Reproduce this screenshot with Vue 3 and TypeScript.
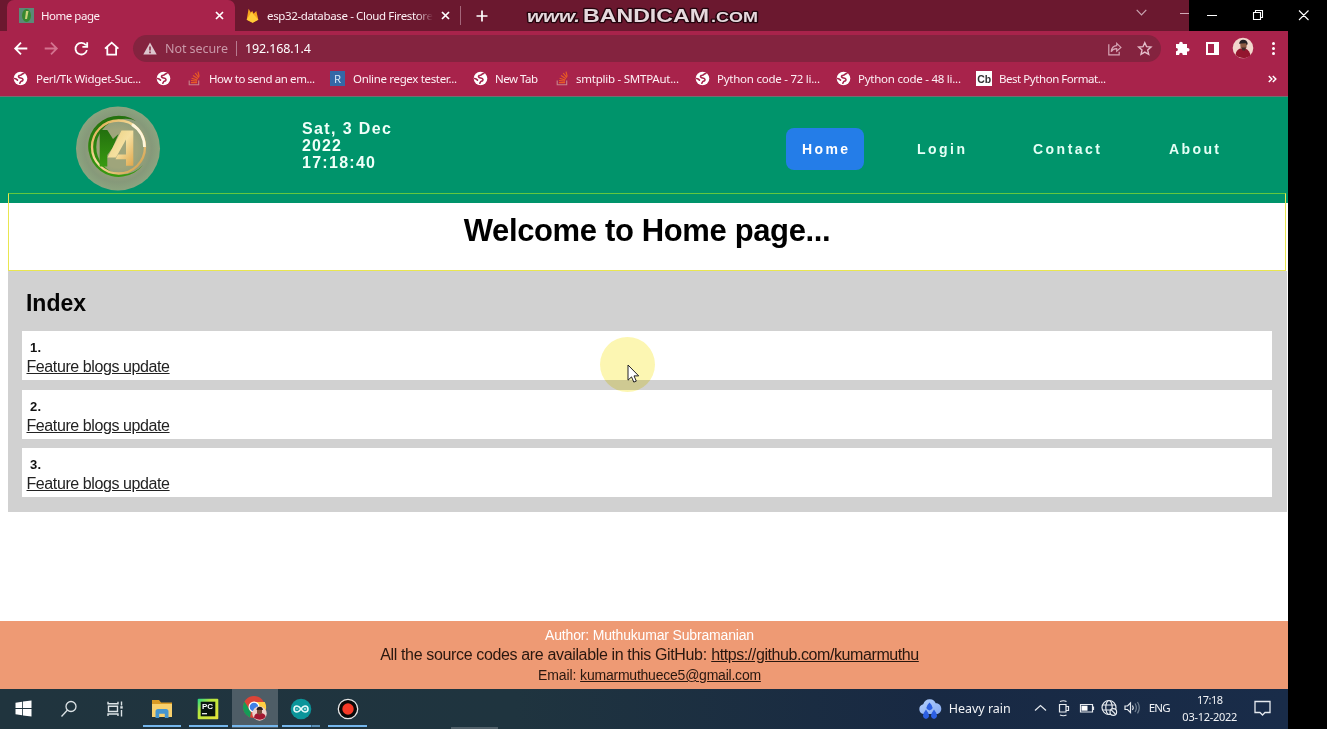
<script setup lang="ts">
interface Bookmark { kind: 'globe' | 'stack' | 'regex' | 'cb'; label: string; slot: number; pad: number; text: number }

const bookmarks: Bookmark[] = [
  { kind: 'globe', label: 'Perl/Tk Widget-Suc...', slot: 143, pad: 23, text: 105 },
  { kind: 'globe', label: '', slot: 32, pad: 14, text: 0 },
  { kind: 'stack', label: 'How to send an em...', slot: 142, pad: 21, text: 106 },
  { kind: 'regex', label: 'Online regex tester...', slot: 143, pad: 23, text: 104 },
  { kind: 'globe', label: 'New Tab', slot: 83, pad: 22, text: 43 },
  { kind: 'stack', label: 'smtplib - SMTPAut...', slot: 139, pad: 20, text: 103 },
  { kind: 'globe', label: 'Python code - 72 li...', slot: 141, pad: 22, text: 103 },
  { kind: 'globe', label: 'Python code - 48 li...', slot: 140, pad: 22, text: 103 },
  { kind: 'cb', label: 'Best Python Format...', slot: 140, pad: 23, text: 107 },
]

const entries = ['1.', '2.', '3.']

/* Tracks a single line of text out to the given width. */
const vFit = {
  mounted(el: HTMLElement, binding: { value: number }) {
    const count = (el.textContent ?? '').length
    if (!binding.value || count < 2) return
    const natural = el.getBoundingClientRect().width
    el.style.letterSpacing = `${(binding.value - natural) / (count - 1)}px`
    el.style.width = `${binding.value}px`
  },
}
</script>

<template>
  <div class="desktop">
    <div class="screen">
      <div class="tabstrip">
        <div class="tab active">
          <svg class="fav" width="15" height="15" viewBox="0 0 15 15"><rect width="15" height="15" fill="#5b8a78" /><ellipse cx="7.5" cy="7.5" rx="4.5" ry="6.5" fill="#37882f" /><path d="M7 3h2.5L8 11H6z" fill="#c9d27a" /></svg>
          <span v-fit="59" class="t ui">Home page</span>
          <svg class="close" width="9" height="9" viewBox="0 0 9 9"><path d="M1 1l7 7M8 1L1 8" stroke="#fff" stroke-width="1.7" /></svg>
        </div>
        <div class="tab second">
          <svg class="fav" width="13" height="15" viewBox="0 0 13 15"><path d="M.7 11.8L2.6.8 5 4.7l1.2-2 1.4 3L10.3 3l2 8.8-5.7 3z" fill="#f8a51e" /><path d="M.7 11.8L5.5 4l6.8 7.8-5.7 3z" fill="#ffcb38" /></svg>
          <span class="clip"><span v-fit="166" class="t ui">esp32-database - Cloud Firestore</span></span>
          <svg class="close" width="9" height="9" viewBox="0 0 9 9"><path d="M1 1l7 7M8 1L1 8" stroke="#fff" stroke-width="1.7" /></svg>
        </div>
        <svg class="plus" width="12" height="12" viewBox="0 0 12 12"><path d="M6 .5v11M.5 6h11" stroke="#fff" stroke-width="1.7" /></svg>
        <svg class="watermark" width="240" height="26" viewBox="0 0 240 26">
          <g font-family="'Liberation Sans', sans-serif" font-weight="bold" fill="#e6d9dd" stroke="#24060f" stroke-width="2.4" paint-order="stroke" stroke-linejoin="round">
            <text x="5" y="18.5" font-size="17" font-style="italic" textLength="53" lengthAdjust="spacingAndGlyphs">www.</text>
            <text x="61" y="18.5" font-size="19" textLength="126" lengthAdjust="spacingAndGlyphs">BANDICAM</text>
            <text x="189" y="18.5" font-size="14" textLength="47" lengthAdjust="spacingAndGlyphs">.COM</text>
          </g>
        </svg>
        <svg class="chev" width="11" height="7" viewBox="0 0 11 7"><path d="M.7.8l4.8 5 4.8-5" fill="none" stroke="#c9a5b1" stroke-width="1.2" /></svg>
        <i class="mini" />
      </div>

      <div class="toolbar">
        <svg class="navs" width="133" height="32" viewBox="0 0 133 32" fill="none" stroke="#fff" stroke-width="1.8">
          <path d="M27.3 17.5H15.4M21 11.7l-5.8 5.8 5.8 5.8" />
          <path d="M44.7 17.5h11.9M51 11.7l5.8 5.8-5.8 5.8" stroke="#d3738f" />
          <path d="M86 14.3a5.8 5.8 0 1 0 .9 4.8M87.2 11.2v4.7h-4.8" />
          <path d="M105 17.7l6.7-6 6.7 6M107.3 16.3v7.3h8.8v-7.3" />
        </svg>
        <div class="omnibox">
          <svg class="warn" width="14" height="13" viewBox="0 0 14 13"><path d="M7 .5L13.7 12.5H.3z" fill="#ddc6ce" /><path d="M7 4.6v3.8M7 9.5v1.7" stroke="#84233f" stroke-width="1.5" /></svg>
          <span v-fit="63" class="t insecure">Not secure</span>
          <i class="sep" />
          <span v-fit="66" class="t addr">192.168.1.4</span>
          <svg class="boxicons" width="50" height="20" viewBox="0 0 50 20" fill="none" stroke="#d6a5b5" stroke-width="1.2">
            <path d="M2.8 5.2v10.6h10.4v-3M5.2 12.7c.4-4 2.7-5.9 5.5-6V4.4l4.2 4-4.2 3.8V9.7c-2.7 0-4.4 1-5.5 3z" />
            <path d="M38.8 3.7l1.8 4 4.4.4-3.3 3 1 4.3-3.9-2.3-3.8 2.3 1-4.3-3.4-3 4.4-.4z" stroke="#e4bfcb" stroke-width="1.4" />
          </svg>
        </div>
        <svg class="actions" width="127" height="32" viewBox="0 0 127 32">
          <path d="M15 13h3.2c-.5-3 4-3 3.6 0H26v4c3.4-.6 3.4 4 0 3.5V24h-4.3c.2-3-3.6-3-3.5 0H15v-3.8c2.5.2 2.5-3.5 0-3.2z" fill="#fff" />
          <path d="M46 12h11v11H46z" fill="none" stroke="#fff" stroke-width="2" /><path d="M53 12h4v11h-4z" fill="#fff" />
          <circle cx="82" cy="17" r="10.3" fill="#f2d7cd" /><path d="M74.5 24c.5-4 2-5.500 4.500-6.500h5c3.500 1 5 4 5.500 7-4 3.500-11 3.500-15-.5z" fill="#93152e" /><path d="M79 11h7l-.6 6-2.700 2.500-3-2.500z" fill="#8c5a43" /><path d="M78.300 13c-.5-5.500 8.300-6 8.400 0l-1 1.300-.7-2-5.200.3z" fill="#272024" /><path d="M80.500 16.500h4.500l-1 3h-2.500z" fill="#43282a" />
          <g fill="#fff"><circle cx="112.5" cy="12.5" r="1.5" /><circle cx="112.5" cy="17.5" r="1.5" /><circle cx="112.5" cy="22.5" r="1.5" /></g>
        </svg>
      </div>

      <div class="bookmarks">
        <div v-for="(b, i) in bookmarks" :key="i" class="bm" :style="{ width: b.slot + 'px' }">
          <span class="bmicon" :style="{ width: b.pad + 'px' }">
            <svg v-if="b.kind === 'globe'" width="15" height="15" viewBox="0 0 15 15"><circle cx="7.5" cy="7.5" r="6.8" fill="#fff" /><path d="M10.8 2.5C9 2.6 8.8 4 7.3 4.2 5.5 4.3 5 5.6 6 6.4c1 .8 2.9.3 3.7 1.5.8 1.1-.2 2.2-1.500 2.400-.8.2-.7 1-1.400 1.900M1.600 7.500c1.300.1 2 .6 2.900 1.600" fill="none" stroke="#a8234b" stroke-width="1.6" stroke-linecap="round" /></svg>
            <svg v-else-if="b.kind === 'stack'" width="13" height="15" viewBox="0 0 13 15"><path d="M1.2 9.5v4.2h9.5V9.5" fill="none" stroke="#c6858c" stroke-width="1.1" /><path d="M3 11.7h6M3 9.5l6 .7M3.6 7.2L9.3 9M5 4.4l5 3.3M7.2 2l3.6 4.7M10 .7l1.2 5" stroke="#e95a24" stroke-width="1.2" /></svg>
            <svg v-else-if="b.kind === 'regex'" width="15" height="15" viewBox="0 0 15 15"><rect width="15" height="15" fill="#3568a7" /><text x="4" y="12" font-family="Open Sans, sans-serif" font-size="11.5" fill="#d8eafa">R</text></svg>
            <svg v-else width="16" height="15" viewBox="0 0 16 15"><rect width="16" height="15" fill="#fff" /><text x="1.2" y="11.5" font-family="Liberation Sans, sans-serif" font-weight="bold" font-size="10.5" fill="#333">Cb</text></svg>
          </span>
          <span v-if="b.label" v-fit="b.text" class="t ui">{{ b.label }}</span>
        </div>
        <svg class="more" width="9" height="8" viewBox="0 0 9 8"><path d="M.8 1l3 3-3 3M4.8 1l3 3-3 3" fill="none" stroke="#fff" stroke-width="1.5" /></svg>
      </div>

      <main class="page">
        <header class="site">
          <svg class="logo" width="86" height="86" viewBox="0 0 86 86">
            <defs>
              <radialGradient id="disc"><stop offset=".45" stop-color="#9fa57b" /><stop offset=".8" stop-color="#86997a" /><stop offset="1" stop-color="#8ca47f" /></radialGradient>
              <linearGradient id="gold" x1="0" y1="0" x2="1" y2="1"><stop offset="0" stop-color="#dda347" /><stop offset=".45" stop-color="#f7e0a0" /><stop offset="1" stop-color="#cf963f" /></linearGradient>
              <linearGradient id="leaf" x1="0" y1="0" x2="0" y2="1"><stop offset="0" stop-color="#23700e" /><stop offset="1" stop-color="#389a11" /></linearGradient>
              <linearGradient id="letter" x1="0" y1="0" x2="1" y2="1"><stop offset="0" stop-color="#e9cf7c" /><stop offset=".5" stop-color="#f5e0a0" /><stop offset="1" stop-color="#e0a84e" /></linearGradient>
            </defs>
            <circle cx="43" cy="42.500" r="42" fill="url(#disc)" />
            <path d="M61 15A30.600 30.600 0 1 0 68 59A30 30 0 0 1 44 68.500A28 28 0 0 1 44 13.500Q54 11.500 61 15z" fill="url(#leaf)" />
            <circle cx="43.500" cy="41" r="26.500" fill="none" stroke="url(#gold)" stroke-width="2.3" />
            <path d="M57 18.500A26.500 26.500 0 0 1 69.500 41" fill="none" stroke="#fff6db" stroke-width="2.800" />
            <path d="M24.700 60.500V24h7.600l5.700 9 5.500-5-6 14-5.200 7v11.500z" fill="url(#leaf)" />
            <path d="M32.500 51.500L46.500 24.500h11.800v35.200H51v-6.400H40.500l2.500-4.800h8V33.500L41 51.500z" fill="url(#letter)" />
          </svg>
          <div class="clock"><div><span v-fit="89" class="t">Sat, 3 Dec</span></div><div><span v-fit="39" class="t">2022</span></div><div><span v-fit="73" class="t">17:18:40</span></div></div>
          <nav>
            <a class="home"><span v-fit="46" class="t">Home</span></a>
            <a class="login"><span v-fit="48" class="t">Login</span></a>
            <a class="contact"><span v-fit="67" class="t">Contact</span></a>
            <a class="about"><span v-fit="50" class="t">About</span></a>
          </nav>
        </header>
        <section class="welcome"><h1><span v-fit="367" class="t">Welcome to Home page...</span></h1></section>
        <section class="index">
          <h2><span v-fit="60" class="t">Index</span></h2>
          <article v-for="n in entries" :key="n" class="entry">
            <b><span v-fit="11" class="t">{{ n }}</span></b>
            <a><span v-fit="143.5" class="t">Feature blogs update</span></a>
          </article>
        </section>
        <footer>
          <p class="author"><span v-fit="209" class="t">Author: Muthukumar Subramanian</span></p>
          <p class="source"><span v-fit="331" class="t pre">All the source codes are available in this GitHub: </span><a><span v-fit="208" class="t">https://github.com/kumarmuthu</span></a></p>
          <p class="email"><span v-fit="42" class="t pre">Email: </span><a><span v-fit="181" class="t">kumarmuthuece5@gmail.com</span></a></p>
        </footer>
      </main>

      <div class="taskbar">
        <div class="task start"><svg width="17" height="17" viewBox="0 0 17 17" fill="#fff"><path d="M.5 2.7l6.7-1v6.4H.5zM8 1.6l8.5-1.2v7.7H8zM.5 9h6.7v6.2l-6.7-.9zM8 9h8.5v7.6L8 15.4z" /></svg></div>
        <div class="task"><svg width="18" height="18" viewBox="0 0 18 18" fill="none" stroke="#dce3e6" stroke-width="1.3"><circle cx="11" cy="6.5" r="5" /><path d="M7.5 10L1.5 16.5" /></svg></div>
        <div class="task"><svg width="17" height="16" viewBox="0 0 17 16" fill="none" stroke="#dce3e6" stroke-width="1.4"><path d="M1 .8v2h10v-2M1 15v-2h10v2M1.5 5.2h9v5.3h-9zM14.5.5v4M14.5 9v6.500" /><path d="M14.5 5.2v2.4" stroke-width="2.4" /></svg></div>
        <div class="task run"><svg width="22" height="20" viewBox="0 0 22 20"><path d="M1 1h7l2 2.5h11V18H1z" fill="#d99a25" /><path d="M1 5h20v13H1z" fill="#f8d06d" /><path d="M4.5 19v-6.5Q4.5 10 7 10h8q2.5 0 2.5 2.5V19h-3.7v-4.2H8.2V19z" fill="#4595cf" /></svg></div>
        <div class="task run"><svg width="22" height="22" viewBox="0 0 22 22"><defs><linearGradient id="pc" x2="1" y2="1"><stop stop-color="#20d789" /><stop offset=".35" stop-color="#b6e73e" /><stop offset="1" stop-color="#e7e43b" /></linearGradient></defs><rect x=".7" y=".7" width="20.6" height="20.6" rx="1" fill="url(#pc)" /><rect x="3.7" y="3.7" width="14.6" height="14.6" fill="#09150f" /><text x="5" y="11.3" font-family="Liberation Sans, sans-serif" font-weight="bold" font-size="8" fill="#fff">PC</text><path d="M5 15.7h5" stroke="#fff" stroke-width="1.2" /></svg></div>
        <div class="task run chrome"><svg width="28" height="27" viewBox="0 0 28 27"><circle cx="13" cy="12" r="11" fill="#db4437" /><path d="M3.5 6.5L10 17l-1 5.4A11 11 0 0 1 3.5 6.5z" fill="#159b57" /><path d="M13 7h10.8A11 11 0 0 1 13 23l5-8z" fill="#ffcd42" /><circle cx="13" cy="12" r="5.5" fill="#fff" /><circle cx="13" cy="12" r="4.3" fill="#4080e8" /><circle cx="18.5" cy="18.5" r="7.2" fill="#efd2cc" /><path d="M13 23q0-5 5.5-5 6 0 6 4-4 5-11.5 1z" fill="#a31831" /><path d="M16 13h5v5l-2.5 2-2.5-2z" fill="#7a4939" /><path d="M15.5 15c0-4.5 6.5-4.5 6.5 0l-6.5-.5z" fill="#251e22" /></svg></div>
        <div class="task run split"><svg width="22" height="22" viewBox="0 0 22 22"><circle cx="11" cy="11" r="10.3" fill="#0b959a" /><path d="M11 11C9.4 8.8 8.3 8 7 8a3 3 0 0 0 0 6c1.3 0 2.4-.8 4-3s2.7-3 4-3a3 3 0 0 1 0 6c-1.3 0-2.4-.8-4-3z" fill="none" stroke="#e6fbfb" stroke-width="1.6" /><path d="M5.7 11h2.5M13.8 11h2.5M15 9.8v2.4" stroke="#e6fbfb" stroke-width=".8" /></svg></div>
        <div class="task run"><svg width="22" height="22" viewBox="0 0 22 22"><circle cx="11" cy="11" r="9.7" fill="#090909" stroke="#e8e8e8" stroke-width="1.3" /><circle cx="11" cy="11" r="5.7" fill="#f63a27" /></svg></div>
        <i class="stub" />
        <div class="weather"><svg width="24" height="22" viewBox="0 0 24 22"><defs><linearGradient id="cloud" x2="1" y2="1"><stop stop-color="#b4d1ff" /><stop offset="1" stop-color="#86aaf0" /></linearGradient></defs><path d="M5.5 16a5 5 0 0 1-.3-9.8C6.5 2.5 9 1 12 1.2c3 0 5 1.7 5.7 4C25 5.2 25 15.5 18.5 16z" fill="url(#cloud)" /><path d="M11.5 4.500q6 6 0 8-6-2 0-8zM8 11.500q6 7.500 0 9.500-6-2 0-9.500zM16 11.500q6 7.500 0 9.500-6-2 0-9.500z" fill="#2c5fe2" /></svg></div>
        <span v-fit="62" class="t rain">Heavy rain</span>
        <svg class="tray" width="108" height="20" viewBox="0 0 108 20" fill="none" stroke="#e6eaef" stroke-width="1.2">
          <path d="M1 12.5l5.5-5 5.5 5" />
          <path d="M25.5 6.500h6.500v7.500h-6.500zM32 8.500h2.500v4H32M26 3.500q3.500-1.500 6.500 0M26 17q3.500 1.500 6.500 0" />
          <path d="M46.500 6.500h12v7.500h-12zM59.500 8.500v3.500" /><path d="M47.500 7.700h6v5h-6z" fill="#fff" stroke="none" />
          <circle cx="75" cy="9.5" r="7" /><ellipse cx="75" cy="9.5" rx="3.2" ry="7" /><path d="M68.6 7h12.8M68.6 12h12.8" /><circle cx="79.3" cy="14" r="3.3" fill="#192941" /><path d="M77.2 11.8l4.2 4.2" />
          <path d="M91 8h2.500l3-3v9.500l-3-3H91z" /><path d="M98.500 7.500q1.500 2.300 0 4.500" /><path d="M101 5.500q2.700 4.300 0 8.500M103.500 4q3.500 5.700 0 11.400" stroke="#718092" />
        </svg>
        <span v-fit="22" class="t lang">ENG</span>
        <div class="time"><div><span v-fit="26" class="t">17:18</span></div><div><span v-fit="55" class="t">03-12-2022</span></div></div>
        <svg class="note" width="17" height="17" viewBox="0 0 17 17"><path d="M1 1.5h15v11h-5L8.5 15 6 12.5H1z" fill="none" stroke="#e6eaef" stroke-width="1.3" /></svg>
      </div>
    </div>

    <div class="wincontrols">
      <svg width="138" height="31" viewBox="0 0 138 31" fill="none" stroke="#fff" stroke-width="1.1"><path d="M18 15.5h10M64.5 12.5h7v7h-7zM66.5 12.5v-2h7v7h-2M110 10.5l9.5 9.5M119.5 10.5L110 20" /></svg>
    </div>
    <div class="halo" />
    <svg class="cursor" width="13" height="21" viewBox="0 0 13 21"><path d="M1 1v15.2l3.5-3.3 2.3 5.2 2.5-1-2.3-5.2h4.7z" fill="#fff" stroke="#222" stroke-width="1" /></svg>
  </div>
</template>

<style>
html, body { margin: 0; background: #000; overflow: hidden; }
</style>

<style scoped>
* { box-sizing: border-box; }
svg { display: block; flex: none; }
.t { display: inline-block; white-space: nowrap; }
.pre { white-space: pre; }
.desktop { position: relative; width: 1327px; height: 729px; background: #000; overflow: hidden; font-family: "Liberation Sans", Arial, sans-serif; }
.screen { width: 1288px; height: 729px; display: flex; flex-direction: column; }
.ui { font: 11.5px/16px "Noto Sans", "Open Sans", sans-serif; color: #fdf1f5; }

.tabstrip { height: 31px; display: flex; align-items: center; background: #6b182f; padding-left: 7px; flex: none; }
.tab { display: flex; align-items: center; height: 31px; flex: none; }
.active { width: 228px; background: #a8234b; border-radius: 7px 7px 0 0; padding: 0 11px 0 12px; }
.active .t { margin-left: 7px; }
.close { margin-left: auto; }
.second { width: 226px; padding: 0 10px 0 11px; border-right: 1px solid #a4667a; height: 19px; }
.clip { width: 166px; margin-left: 8px; overflow: hidden; height: 18px; display: flex; align-items: center; -webkit-mask-image: linear-gradient(90deg, #000 90%, transparent); mask-image: linear-gradient(90deg, #000 90%, transparent); }
.plus { margin-left: 15px; }
.watermark { margin-left: 34px; }
.chev { margin: -6px 0 0 374px; }
.mini { width: 9px; height: 1px; background: #d2aab7; margin: -5px 0 0 33px; }

.toolbar { height: 32px; background: #a8234b; display: flex; flex: none; align-items: flex-start; }
.omnibox { width: 1028px; height: 27px; margin-top: 4px; border-radius: 14px; background: #84233f; display: flex; align-items: center; padding-left: 10px; flex: none; font: 12.5px/18px "Noto Sans", "Open Sans", sans-serif; }
.insecure { margin-left: 8px; color: #c998a8; }
.sep { width: 1px; height: 15px; margin: 0 8px; background: #b77b90; }
.addr { color: #fff; }
.boxicons { margin-left: auto; margin-right: 5px; }

.bookmarks { height: 34px; background: #a8234b; display: flex; align-items: center; padding: 0 0 2px 13px; flex: none; border-bottom: 1px solid #746f72; }
.bm { display: flex; align-items: center; flex: none; }
.bmicon { flex: none; }
.more { margin-left: 152px; }

.page { height: 592px; background: #fff; display: flex; flex-direction: column; flex: none; }
.site { height: 106px; background: #00946b; display: flex; flex: none; }
.logo { margin: 9px 0 0 75px; }
.clock { margin: 23px 0 0 141px; width: 100px; font-weight: bold; font-size: 16px; line-height: 17px; color: #f0fff9; }
.clock div { height: 17px; }
nav { display: flex; margin: 31px 0 0 384px; font-weight: bold; font-size: 14px; line-height: 42px; color: #e5fff6; }
nav a { height: 42px; flex: none; }
.home { width: 78px; padding-left: 16px; border-radius: 8px; background: #247de8; color: #fff; }
.login { margin-left: 53px; }
.contact { margin-left: 68px; }
.about { margin-left: 69px; }
.welcome { position: relative; height: 78px; margin: -10px 2px 0 8px; border: 1px solid #e9e650; border-top-color: #62c83f; flex: none; text-align: center; }
h1 { margin: 19px 0 0; font-size: 31px; line-height: 36px; color: #000; }
.index { height: 241px; margin: 0 1px 0 8px; background: #d1d1d1; padding: 18px 15px 0 14px; flex: none; }
h2 { margin: 0 0 0 4px; height: 42px; font-size: 23px; line-height: 28px; color: #050505; }
.entry { height: 49px; background: #fff; margin-bottom: 9.6px; padding: 8px 0 0 4.5px; color: #222; display: flex; flex-direction: column; }
.entry b { font-size: 13px; line-height: 17px; height: 18px; padding-left: 3.5px; color: #111; }
.entry a { font-size: 16px; line-height: 19px; text-decoration: none; }
.entry a .t, footer a .t { text-decoration: underline; }
footer { margin-top: auto; height: 68px; background: #ee9a74; text-align: center; color: #29170f; padding: 5px 0 0 11px; }
footer p { margin: 0; }
.author { font-size: 14px; line-height: 18px; color: #fff; }
.source { font-size: 16px; line-height: 21px; }
.email { font-size: 14px; line-height: 20px; }

.taskbar { height: 40px; flex: none; display: flex; background: linear-gradient(90deg, #20343e, #1f343f 40%, #182943 72%, #192c49); position: relative; font-family: "Noto Sans", "Open Sans", sans-serif; color: #f1f3f6; }
.task { width: 46.4px; height: 39px; display: flex; justify-content: center; align-items: center; flex: none; }
.start { width: 46px; }
.run { position: relative; }
.run::after { content: ""; position: absolute; left: 4px; right: 4px; bottom: 1px; height: 2px; background: #75b7ed; }
.chrome { background: #4e5d66; }
.chrome::after { left: 0; right: 0; }
.split::after { background: linear-gradient(90deg, #75b7ed 77%, #3c6887 77% 80%, #5990b9 80%); }
.stub { align-self: flex-end; width: 47px; height: 2px; background: #52616a; margin-left: 80px; }
.weather { margin: 9px 0 0 420px; }
.rain { font-size: 12.5px; line-height: 40px; margin-left: 7px; }
.tray { margin: 9px 0 0 23px; }
.lang { font-size: 11.5px; line-height: 38px; margin-left: 7px; }
.time { width: 56px; margin: 2px 0 0 11px; font-size: 11px; line-height: 17px; text-align: center; }
.time div { height: 17px; }
.note { margin: 11px 0 0 16px; }
.wincontrols { position: absolute; left: 1189px; top: 0; width: 138px; height: 31px; background: #000; }
.halo { position: absolute; left: 600px; top: 337px; width: 55px; height: 55px; border-radius: 50%; background: #fcf5a4; mix-blend-mode: multiply; opacity: .85; }
.cursor { position: absolute; left: 626.5px; top: 364px; }
</style>
